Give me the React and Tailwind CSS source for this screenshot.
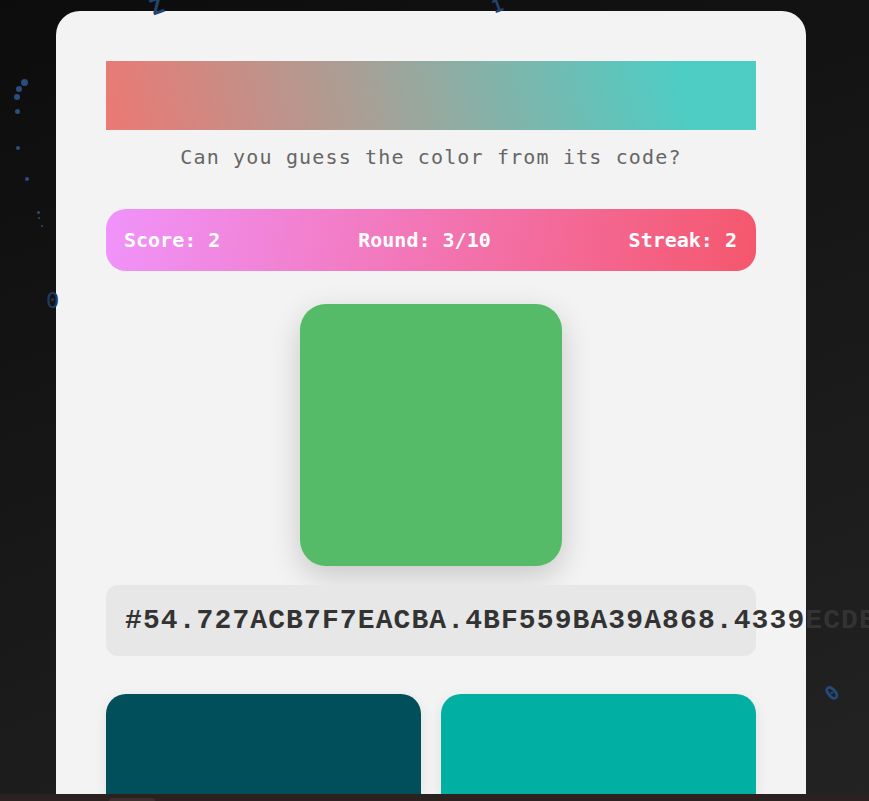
import React from "react";

const stats = [
  { label: "Score", value: "2" },
  { label: "Round", value: "3/10" },
  { label: "Streak", value: "2" },
];

const options = ["#014f5b", "#01afa3"];

const dots = [
  { x: 24, y: 82, s: 7 },
  { x: 19, y: 89, s: 6 },
  { x: 17, y: 97, s: 6 },
  { x: 17, y: 111, s: 5 },
  { x: 18, y: 148, s: 4 },
  { x: 27, y: 179, s: 4 },
  { x: 38, y: 212, s: 3 },
  { x: 39, y: 218, s: 2 },
  { x: 42, y: 226, s: 2 },
];

const App = () => {
  return (
    <div className="relative h-[801px] w-[869px] overflow-hidden bg-[linear-gradient(160deg,#0c0c0c,#1a1a1a_60%,#232323)] font-['DejaVu_Sans_Mono',monospace]">
      {/* faint background decorations */}
      {dots.map((d, i) => (
        <span
          key={i}
          className="absolute rounded-full bg-[#2f5f9a] opacity-80"
          style={{ left: d.x - d.s / 2, top: d.y - d.s / 2, width: d.s, height: d.s }}
        />
      ))}
      <span className="absolute left-[150px] top-[-10px] rotate-[-20deg] text-[22px] font-bold text-[#22446e]">Z</span>
      <span className="absolute left-[492px] top-[-8px] rotate-[-20deg] text-[18px] font-bold text-[#22446e]">1</span>
      <span className="absolute left-[46px] top-[284px] text-[22px] text-[#1f3c60]">0</span>
      <span className="absolute left-[826px] top-[678px] rotate-[-40deg] text-[20px] font-bold text-[#234a7a]">0</span>

      <div className="flex h-[794px] flex-col px-[56px] pt-[11px]">
        <div className="flex w-[750px] flex-1 flex-col rounded-t-[24px] bg-[#f3f3f3] px-[50px] pt-[50px]">
          <div className="h-[69px] bg-[linear-gradient(75deg,#ec7873,#a8a096_40%,#4ecdc4_88%)]" />
          <p className="mt-[13px] text-center text-[20px] leading-[28px] tracking-[1.15px] text-[#666]">
            Can you guess the color from its code?
          </p>

          <div className="mt-[38px] flex h-[62px] items-center justify-between rounded-[20px] bg-[linear-gradient(100deg,#f093fb,#f5576c)] pl-[18px] pr-[19px] text-[20px] font-bold text-white">
            {stats.map((s) => (
              <span key={s.label}>
                {s.label}: {s.value}
              </span>
            ))}
          </div>

          <div className="mt-[33px] flex justify-center">
            <div className="h-[262px] w-[262px] rounded-[26px] bg-[#55bb69] shadow-[0_10px_30px_rgba(0,0,0,0.18)]" />
          </div>

          <div className="mt-[19px] flex h-[71px] items-center rounded-[12px] bg-[#e7e7e7] px-[19px]">
            <span className="whitespace-nowrap font-['Liberation_Mono',monospace] text-[28px] font-bold tracking-[1.1px] text-[#333]">
              #54.727ACB7F7EACBA.4BF559BA39A868.4339ECDB5
            </span>
          </div>

          <div className="mt-[38px] grid flex-1 grid-cols-2 gap-5">
            {options.map((c) => (
              <button
                key={c}
                className="rounded-t-[20px] shadow-[0_4px_14px_rgba(0,0,0,0.08)]"
                style={{ backgroundColor: c }}
              />
            ))}
          </div>
        </div>
      </div>

      <div className="relative h-[7px] bg-[#2b221f]">
        <span className="absolute left-[109px] top-[4px] h-[3px] w-[46px] rounded-t bg-[#3a302c]" />
      </div>
    </div>
  );
};

export default App;
